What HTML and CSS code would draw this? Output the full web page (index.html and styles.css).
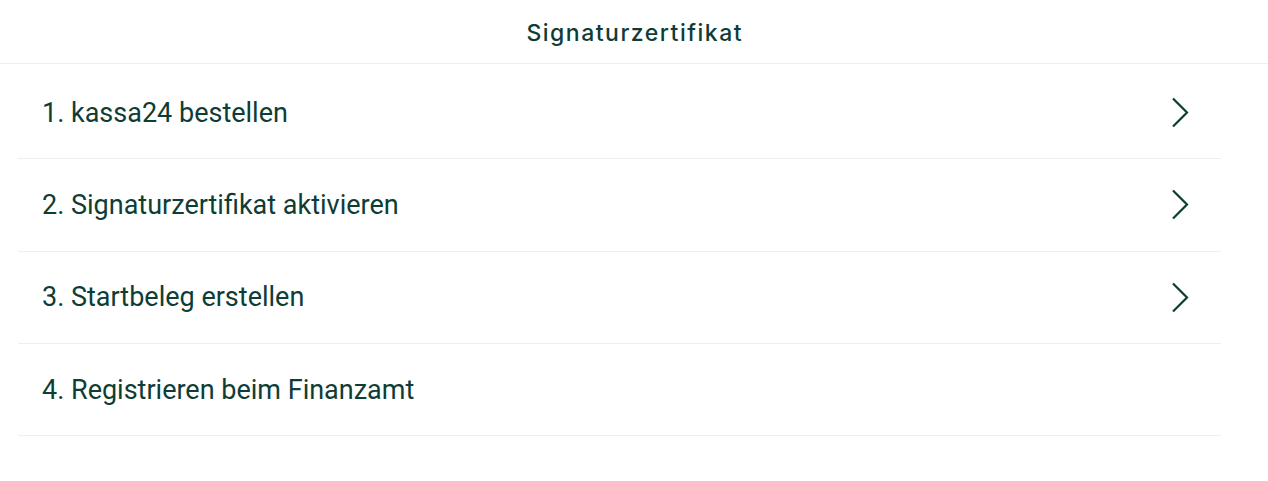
FILE: index.html
```html
<!DOCTYPE html>
<html lang="de">
<head>
<meta charset="utf-8">
<title>Signaturzertifikat</title>
<link rel="stylesheet" href="styles.css">
</head>
<body>
<header class="topbar"><h1 class="title">Signaturzertifikat</h1></header>
<ul class="steps">
  <li class="step"><span class="label">1. kassa24 bestellen</span>
    <svg class="chev" width="18" height="31" viewBox="0 0 18 31"><path d="M2 1.5 L16 15.5 L2 29.5" fill="none" stroke="currentColor" stroke-width="2.2"/></svg></li>
  <li class="step"><span class="label">2. Signaturzertifikat aktivieren</span>
    <svg class="chev" width="18" height="31" viewBox="0 0 18 31"><path d="M2 1.5 L16 15.5 L2 29.5" fill="none" stroke="currentColor" stroke-width="2.2"/></svg></li>
  <li class="step"><span class="label">3. Startbeleg erstellen</span>
    <svg class="chev" width="18" height="31" viewBox="0 0 18 31"><path d="M2 1.5 L16 15.5 L2 29.5" fill="none" stroke="currentColor" stroke-width="2.2"/></svg></li>
  <li class="step"><span class="label">4. Registrieren beim Finanzamt</span></li>
</ul>
</body>
</html>
```
FILE: styles.css
```css
* { box-sizing: border-box; }
html, body { margin: 0; padding: 0; background: #ffffff; }
body { color: #0e3d36; font-family: Roboto, "Liberation Sans", sans-serif; }
.topbar {
  height: 64px;
  border-bottom: 1px solid #eeeeee;
  display: flex;
  align-items: center;
  justify-content: center;
}
.title {
  margin: 0;
  font-family: Inter, "DejaVu Sans", sans-serif;
  font-weight: 500;
  font-size: 23px;
  letter-spacing: 1.5px;
  padding-top: 3px;
  padding-left: 1.5px;
  color: #0e3d36;
}
.steps {
  list-style: none;
  margin: 0 47px 0 18px;
  padding: 3px 0 0 0;
}
.step {
  height: 92.3px;
  border-bottom: 1px solid #eeeeee;
  display: flex;
  align-items: center;
  justify-content: space-between;
  padding: 0 32px 0 24px;
}
.label {
  font-size: 27px;
  line-height: 30px;
}
.chev { display: block; color: #0e3d36; }
```
